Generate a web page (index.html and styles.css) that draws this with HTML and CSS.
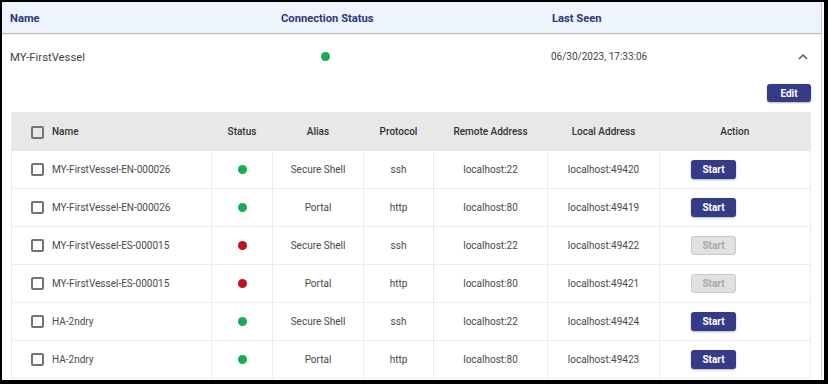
FILE: index.html
```html
<!DOCTYPE html>
<html>
<head>
<meta charset="utf-8">
<link rel="stylesheet" href="styles.css">
</head>
<body>
<div class="frame">
  <div class="panel">
    <div class="head-row">
      <div class="hcell">Name</div>
      <div class="hcell">Connection Status</div>
      <div class="hcell">Last Seen</div>
    </div>
    <div class="vessel-row">
      <div class="vname">MY-FirstVessel</div>
      <div class="vstatus"><span class="dot ok"></span></div>
      <div class="vdate">06/30/2023, 17:33:06</div>
      <div class="vtoggle">
        <svg class="chev" width="10" height="7" viewBox="0 0 10 7"><path d="M1 6 L5 2 L9 6" fill="none" stroke="#555" stroke-width="1.5"/></svg>
      </div>
    </div>
    <div class="details">
      <div class="toolbar"><button class="btn">Edit</button></div>
      <table class="ports">
        <colgroup>
          <col class="c-name"><col class="c-status"><col class="c-alias"><col class="c-proto"><col class="c-remote"><col class="c-local"><col class="c-action">
        </colgroup>
        <thead>
          <tr>
            <th class="name-cell"><div class="nm"><span class="cb"></span>Name</div></th>
            <th>Status</th>
            <th>Alias</th>
            <th>Protocol</th>
            <th>Remote Address</th>
            <th>Local Address</th>
            <th>Action</th>
          </tr>
        </thead>
        <tbody>
          <tr>
            <td class="name-cell"><div class="nm"><span class="cb"></span>MY-FirstVessel-EN-000026</div></td>
            <td><span class="dot ok"></span></td>
            <td>Secure Shell</td><td>ssh</td><td>localhost:22</td><td>localhost:49420</td>
            <td class="action"><button class="btn sm">Start</button></td>
          </tr>
          <tr>
            <td class="name-cell"><div class="nm"><span class="cb"></span>MY-FirstVessel-EN-000026</div></td>
            <td><span class="dot ok"></span></td>
            <td>Portal</td><td>http</td><td>localhost:80</td><td>localhost:49419</td>
            <td class="action"><button class="btn sm">Start</button></td>
          </tr>
          <tr>
            <td class="name-cell"><div class="nm"><span class="cb"></span>MY-FirstVessel-ES-000015</div></td>
            <td><span class="dot bad"></span></td>
            <td>Secure Shell</td><td>ssh</td><td>localhost:22</td><td>localhost:49422</td>
            <td class="action"><button class="btn sm disabled">Start</button></td>
          </tr>
          <tr>
            <td class="name-cell"><div class="nm"><span class="cb"></span>MY-FirstVessel-ES-000015</div></td>
            <td><span class="dot bad"></span></td>
            <td>Portal</td><td>http</td><td>localhost:80</td><td>localhost:49421</td>
            <td class="action"><button class="btn sm disabled">Start</button></td>
          </tr>
          <tr>
            <td class="name-cell"><div class="nm"><span class="cb"></span>HA-2ndry</div></td>
            <td><span class="dot ok"></span></td>
            <td>Secure Shell</td><td>ssh</td><td>localhost:22</td><td>localhost:49424</td>
            <td class="action"><button class="btn sm">Start</button></td>
          </tr>
          <tr>
            <td class="name-cell"><div class="nm"><span class="cb"></span>HA-2ndry</div></td>
            <td><span class="dot ok"></span></td>
            <td>Portal</td><td>http</td><td>localhost:80</td><td>localhost:49423</td>
            <td class="action"><button class="btn sm">Start</button></td>
          </tr>
        </tbody>
      </table>
    </div>
  </div>
</div>
</body>
</html>
```

FILE: styles.css
```css
* { box-sizing: border-box; }
html, body { margin: 0; padding: 0; background: #000; }
body { font-family: Roboto, "Liberation Sans", sans-serif; color: #474747; }

.frame {
  width: 828px;
  height: 384px;
  border-style: solid;
  border-color: #000;
  border-width: 2px 4px 4px 2px;
  background: #fff;
  overflow: hidden;
}
.panel {
  width: 820px;
  height: 100%;
  border-right: 1px solid #cfcfcf;
  background: #fff;
}

.head-row {
  height: 31px;
  display: grid;
  grid-template-columns: 271px 271px 1fr;
  align-items: center;
  padding-left: 8px;
  background: #edf4fe;
  box-shadow: 0 1px 1px rgba(0,0,0,0.28);
  position: relative;
}
.hcell {
  font-size: 11.2px;
  font-weight: 700;
  color: #2f3778;
  padding-top: 1px;
}

.vessel-row {
  height: 46px;
  display: grid;
  grid-template-columns: 271px 271px 1fr 24px;
  align-items: center;
  padding-left: 8px;
}
.vname { font-size: 11.3px; color: #444; padding-top: 2px; }
.vstatus { padding-left: 40px; display: flex; align-items: center; padding-top: 1px; }
.vdate { font-size: 10px; color: #444; margin-left: -1px; }
.vtoggle { display: flex; align-items: center; }
.chev { display: block; margin-left: 1px; }

.dot {
  display: block;
  width: 9px;
  height: 9px;
  border-radius: 50%;
}
.ports .dot { margin: 0 auto; }
.dot.ok { background: #16ad55; }
.dot.bad { background: #c4101a; }

.toolbar {
  display: flex;
  justify-content: flex-end;
  padding: 5px 10px 0 0;
  height: 33px;
}
.btn {
  font-family: Roboto, "Liberation Sans", sans-serif;
  font-weight: 700;
  font-size: 10px;
  color: #fff;
  background: #363b87;
  border: none;
  border-radius: 3px;
  width: 44px;
  height: 18px;
  padding: 0;
  box-shadow: 0 1px 2px rgba(0,0,0,0.3);
  cursor: pointer;
}
.btn.sm { width: 45px; height: 19px; }
.btn.disabled {
  background: #e1e1e1;
  color: #a9a9a9;
  border: 1px solid #c9c9c9;
  box-shadow: none;
}

.ports {
  margin-left: 9px;
  width: 799px;
  border-collapse: collapse;
  table-layout: fixed;
  font-size: 10px;
  border: 1px solid #ebebeb;
}
.c-name { width: 200px; }
.c-status { width: 61px; }
.c-alias { width: 91px; }
.c-proto { width: 70px; }
.c-remote { width: 114px; }
.c-local { width: 112px; }
.c-action { width: 151px; }

.ports thead tr { background: #e8e8e9; height: 38px; }
.ports th {
  font-weight: 500;
  color: #333;
  text-align: center;
  padding: 0;
}
.ports tbody tr { height: 38px; }
.ports td {
  text-align: center;
  padding: 0;
  color: #4a4a4a;
  border-right: 1px solid #ececec;
  border-bottom: 1px solid #ececec;
}
.ports td:last-child { border-right: none; }
.ports .name-cell {
  text-align: left;
  padding-left: 19px;
  white-space: nowrap;
}
.nm {
  display: flex;
  align-items: center;
  gap: 8px;
}
.cb {
  flex: none;
  width: 13px;
  height: 13px;
  border: 2px solid #737373;
  border-radius: 2px;
}
.ports th .nm .cb { margin-top: 1px; }
.ports td.action { text-align: left; padding-left: 31px; }
.ports td.action .btn { vertical-align: middle; }
```
